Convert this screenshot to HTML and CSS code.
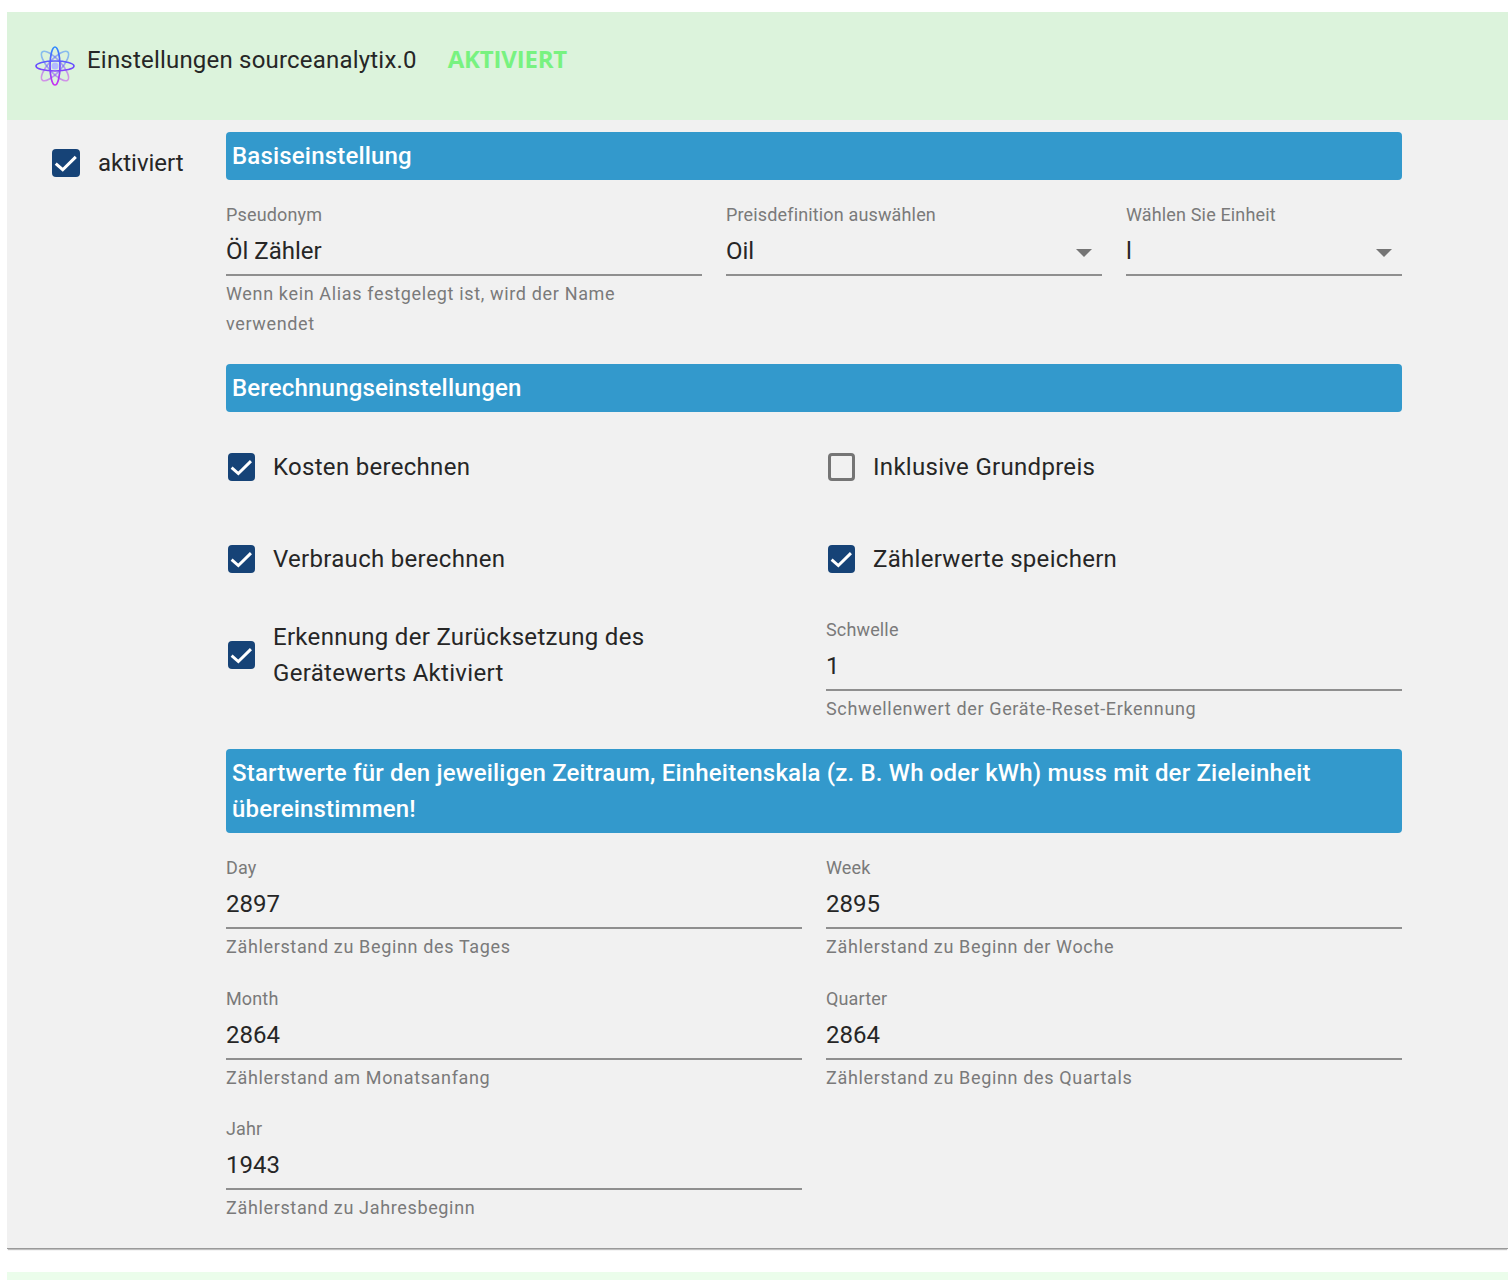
FILE: index.html
```html
<!DOCTYPE html>
<html lang="de">
  <head>
    <meta charset="UTF-8" />
    <title>Einstellungen sourceanalytix.0</title>
    <link rel="stylesheet" href="styles.css">
  </head>
  <body>
    <section class="panel">
      <header class="panel__header">
        <svg class="panel__icon" viewBox="0 0 40 40" width="40" height="40" aria-hidden="true">
          <defs>
            <linearGradient id="atom" x1="0" y1="0" x2="0" y2="40" gradientUnits="userSpaceOnUse">
              <stop offset="0" stop-color="#2a8cff" />
              <stop offset="0.5" stop-color="#6a4cff" />
              <stop offset="1" stop-color="#d030f0" />
            </linearGradient>
          </defs>
          <g fill="none" stroke="url(#atom)">
            <ellipse class="panel__orbit" cx="20" cy="20" rx="6.5" ry="19" transform="rotate(42 20 20)" />
            <ellipse class="panel__orbit" cx="20" cy="20" rx="6.5" ry="19" transform="rotate(-42 20 20)" />
            <ellipse cx="20" cy="20" rx="5" ry="19" stroke-width="1.7" />
            <ellipse cx="20" cy="20" rx="19" ry="5" stroke-width="1.7" />
          </g>
          <circle cx="20" cy="20" r="3.5" fill="#b3bcff" />
        </svg>
        <span class="panel__title">Einstellungen sourceanalytix.0</span>
        <span class="panel__status">AKTIVIERT</span>
      </header>
      <div class="panel__body">
        <label class="check check--side"><span class="check__box check__box--on"><svg viewBox="0 0 24 24"><path d="M3.2 12.6l6 5.2L20.4 6.8" /></svg></span>aktiviert</label>
        <div class="settings">
          <h2 class="banner">Basiseinstellung</h2>
          <div class="row row--first">
            <div class="field field--alias">
              <div class="field__label">Pseudonym</div>
              <div class="field__input">Öl Zähler</div>
              <div class="field__help">Wenn kein Alias festgelegt ist, wird der Name verwendet</div>
            </div>
            <div class="field field--price">
              <div class="field__label">Preisdefinition auswählen</div>
              <div class="field__input field__input--select">Oil</div>
            </div>
            <div class="field field--unit">
              <div class="field__label">Wählen Sie Einheit</div>
              <div class="field__input field__input--select">l</div>
            </div>
          </div>

          <h2 class="banner">Berechnungseinstellungen</h2>
          <div class="grid grid--checks">
            <label class="check"><span class="check__box check__box--on"><svg viewBox="0 0 24 24"><path d="M3.2 12.6l6 5.2L20.4 6.8" /></svg></span>Kosten berechnen</label>
            <label class="check"><span class="check__box"></span>Inklusive Grundpreis</label>
            <label class="check"><span class="check__box check__box--on"><svg viewBox="0 0 24 24"><path d="M3.2 12.6l6 5.2L20.4 6.8" /></svg></span>Verbrauch berechnen</label>
            <label class="check"><span class="check__box check__box--on"><svg viewBox="0 0 24 24"><path d="M3.2 12.6l6 5.2L20.4 6.8" /></svg></span>Zählerwerte speichern</label>
            <label class="check check--reset"><span class="check__box check__box--on"><svg viewBox="0 0 24 24"><path d="M3.2 12.6l6 5.2L20.4 6.8" /></svg></span><span class="check__text">Erkennung der Zurücksetzung des Gerätewerts Aktiviert</span></label>
            <div class="field">
              <div class="field__label">Schwelle</div>
              <div class="field__input">1</div>
              <div class="field__help">Schwellenwert der Geräte-Reset-Erkennung</div>
            </div>
          </div>

          <h2 class="banner">Startwerte für den jeweiligen Zeitraum, Einheitenskala (z. B. Wh oder kWh) muss mit der Zieleinheit übereinstimmen!</h2>
          <div class="grid grid--values">
            <div class="field">
              <div class="field__label">Day</div>
              <div class="field__input">2897</div>
              <div class="field__help">Zählerstand zu Beginn des Tages</div>
            </div>
            <div class="field">
              <div class="field__label">Week</div>
              <div class="field__input">2895</div>
              <div class="field__help">Zählerstand zu Beginn der Woche</div>
            </div>
            <div class="field">
              <div class="field__label">Month</div>
              <div class="field__input">2864</div>
              <div class="field__help">Zählerstand am Monatsanfang</div>
            </div>
            <div class="field">
              <div class="field__label">Quarter</div>
              <div class="field__input">2864</div>
              <div class="field__help">Zählerstand zu Beginn des Quartals</div>
            </div>
            <div class="field">
              <div class="field__label">Jahr</div>
              <div class="field__input">1943</div>
              <div class="field__help">Zählerstand zu Jahresbeginn</div>
            </div>
          </div>
        </div>
      </div>
    </section>
    <div class="panel-next"></div>
  </body>
</html>
```

FILE: styles.css
```css
:root {
  --color-header: #dcf3dc;
  --color-panel: #f1f1f1;
  --color-banner: #3399cc;
  --color-check: #164377;
  --color-text: #262626;
  --color-muted: #7a7a7a;
  --color-line: #8f8f8f;
}

*,
*::before,
*::after {
  box-sizing: border-box;
}

html,
body {
  height: 100%;
}

body {
  margin: 0;
  padding: 12px 0 0 7px;
  overflow: hidden;
  font-family: Roboto, sans-serif;
  color: var(--color-text);
  background-color: #fff;
}

.panel {
  height: 1237px;
  background-color: var(--color-panel);
  border-bottom: 1px solid #9a9a9a;
  box-shadow: 0 2px 1px -1px rgba(0, 0, 0, 0.25);
}

.panel__header {
  height: 108px;
  padding: 34px 0 0 28px;
  display: flex;
  align-items: flex-start;
  background-color: var(--color-header);
}

.panel__icon {
  flex-shrink: 0;
}

.panel__title {
  margin-left: 12px;
  font-size: 24px;
  line-height: 28px;
  letter-spacing: 0.2px;
}

.panel__status {
  margin-left: 31px;
  font-family: "Open Sans", sans-serif;
  font-size: 24px;
  line-height: 26px;
  font-weight: 700;
  letter-spacing: -0.2px;
  color: #78f280;
}

.panel__body {
  display: flex;
  padding: 12px 0 0 45px;
}

.settings {
  width: 1176px;
}

.banner {
  margin: 0;
  padding: 6px;
  border-radius: 4px;
  font-size: 24px;
  line-height: 36px;
  font-weight: 500;
  letter-spacing: 0.18px;
  color: #fff;
  background-color: var(--color-banner);
}

.row {
  display: flex;
  gap: 24px;
  margin: 20px 0 25px;
}

.field {
  min-width: 0;
}

.field--alias {
  width: 476px;
}

.field--price {
  width: 376px;
}

.field--unit {
  width: 276px;
}

.field__label {
  height: 30px;
  font-size: 18px;
  line-height: 30px;
  letter-spacing: 0.15px;
  color: var(--color-muted);
}

.field__input {
  position: relative;
  height: 46px;
  border-bottom: 2px solid var(--color-line);
  font-size: 24px;
  line-height: 42px;
}

.field__input--select::after {
  content: "";
  position: absolute;
  right: 10px;
  top: 19px;
  border-left: 8px solid transparent;
  border-right: 8px solid transparent;
  border-top: 8px solid #757575;
}

.field__help {
  margin-top: 3px;
  font-size: 18px;
  line-height: 30px;
  letter-spacing: 0.65px;
  color: var(--color-muted);
}

.grid {
  display: grid;
  grid-template-columns: 576px 576px;
  column-gap: 24px;
}

.grid--checks {
  row-gap: 20px;
  margin: 19px 0 25px;
  grid-auto-rows: 72px 72px 109px;
}

.grid--values {
  row-gap: 21.5px;
  margin: 20px 0 0;
}

.check {
  display: flex;
  align-items: center;
  gap: 18px;
  height: 72px;
  padding-left: 2px;
  font-size: 24px;
  line-height: 36px;
  letter-spacing: 0.3px;
}

.check--side {
  flex-shrink: 0;
  align-self: flex-start;
  width: 174px;
  height: 62px;
  padding-left: 0;
  letter-spacing: 0;
}

.check--reset {
  margin-top: 4px;
}

.check__text {
  max-width: 450px;
}

.check__box {
  flex-shrink: 0;
  width: 27px;
  height: 28px;
  border: 3px solid #757575;
  border-radius: 4px;
}

.check--side .check__box {
  width: 28px;
}

.check__box--on {
  border: 0;
  background-color: var(--color-check);
}

.check__box svg {
  display: block;
  width: 100%;
  height: 100%;
  fill: none;
  stroke: #fff;
  stroke-width: 2.6;
}

.panel__orbit {
  opacity: 0.5;
  stroke-width: 1.6;
}

.panel-next {
  height: 12px;
  margin-top: 23px;
  background-color: #ebfdeb;
}
```
